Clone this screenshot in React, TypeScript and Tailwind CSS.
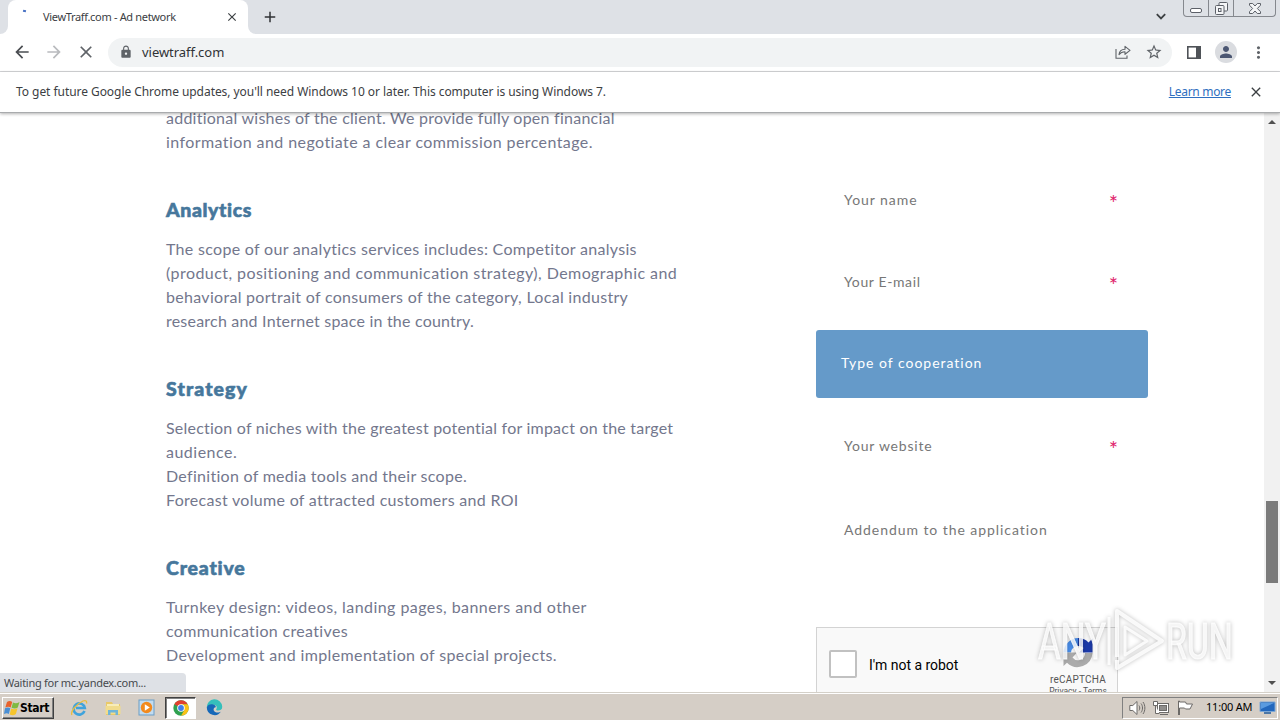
import { MdAdd, MdArrowBack, MdArrowForward, MdClose, MdLock, MdMoreVert, MdPerson, MdStarBorder } from "react-icons/md";

type Line = { text: string; tracking: string };

const sections: { title: string; tracking: string; lines: Line[] }[] = [
    {
        title: "Analytics",
        tracking: "tracking-[0.6px]",
        lines: [
            { text: "The scope of our analytics services includes: Competitor analysis", tracking: "tracking-[0.305px]" },
            { text: "(product, positioning and communication strategy), Demographic and", tracking: "tracking-[0.435px]" },
            { text: "behavioral portrait of consumers of the category, Local industry", tracking: "tracking-[0.3px]" },
            { text: "research and Internet space in the country.", tracking: "tracking-[0.21px]" },
        ],
    },
    {
        title: "Strategy",
        tracking: "tracking-[1.1px]",
        lines: [
            { text: "Selection of niches with the greatest potential for impact on the target", tracking: "tracking-[0.22px]" },
            { text: "audience.", tracking: "tracking-[0.5px]" },
            { text: "Definition of media tools and their scope.", tracking: "tracking-[0.29px]" },
            { text: "Forecast volume of attracted customers and ROI", tracking: "tracking-[0.3px]" },
        ],
    },
    {
        title: "Creative",
        tracking: "tracking-[0.8px]",
        lines: [
            { text: "Turnkey design: videos, landing pages, banners and other", tracking: "tracking-[0.435px]" },
            { text: "communication creatives", tracking: "tracking-[0.34px]" },
            { text: "Development and implementation of special projects.", tracking: "tracking-[0.36px]" },
        ],
    },
];

function TabStrip() {
    return (
        <div className="flex h-[34px] items-start justify-between bg-[#dee1e6]">
            <div className="flex h-full items-start">
                <div className="h-full w-2 bg-white">
                    <div className="h-full w-2 rounded-br-lg bg-[#dee1e6]" />
                </div>
                <div className="flex h-full w-[240px] items-center rounded-t-lg bg-white pl-[15px]">
                    <div className="mb-3 h-[2px] w-[3px] rotate-12 bg-[#4a72c4]" />
                    <span className="ml-[17px] w-[180px] whitespace-nowrap text-[11px] tracking-[-0.33px] text-[#3c4043]">ViewTraff.com - Ad network</span>
                    <MdClose className="ml-[2px] h-[14px] w-[14px] text-[#3c4043]" />
                </div>
                <div className="h-full w-2 bg-white">
                    <div className="h-full w-2 rounded-bl-lg bg-[#dee1e6]" />
                </div>
                <MdAdd className="ml-[5px] mt-2 h-[18px] w-[18px] text-[#303236]" />
            </div>
            <div className="flex items-start">
                <svg className="mr-[17px] mt-3 h-[9px] w-[10px]" viewBox="0 0 10 9" fill="none" stroke="#3c4043" strokeWidth="1.8">
                    <path d="M0.8 2.2 5 6.4 9.2 2.2" />
                </svg>
                <div className="mr-[4px] flex h-[17px] w-[93px] rounded-b-[4px] border border-t-0 border-[#85888e] text-[#5c6068]">
                    <div className="flex w-[25px] justify-center border-r border-[#85888e] pt-2">
                        <div className="h-[5px] w-3 rounded-[2px] border border-[#5c6068] bg-white" />
                    </div>
                    <div className="flex w-[25px] justify-center border-r border-[#85888e]">
                        <svg className="mt-[2px] h-[13px] w-[13px]" viewBox="0 0 13 13" fill="#f4f5f7" stroke="#5c6068">
                            <rect x="4" y="0.5" width="8.5" height="8.5" rx="1" />
                            <rect x="0.5" y="3.5" width="8.5" height="9" rx="1" />
                            <rect x="3.5" y="6.5" width="2.5" height="3" />
                        </svg>
                    </div>
                    <div className="flex flex-1 justify-center">
                        <svg className="mt-[3px] h-[11px] w-3" viewBox="0 0 12 11" fill="#f4f5f7" stroke="#5c6068">
                            <path d="M0.5 0.5h3.2L6 3l2.3-2.5h3.2v1.7L8.4 5.5l3.1 3.2v1.8H8.3L6 8l-2.3 2.5H0.5V8.7l3.1-3.2L0.5 2.2z" />
                        </svg>
                    </div>
                </div>
            </div>
        </div>
    );
}

function Toolbar() {
    return (
        <div className="flex h-[38px] items-center border-b border-[#d5d6d9] bg-white pb-[1px] text-[#5f6368]">
            <MdArrowBack className="ml-[12px] h-5 w-5 text-[#4a4d51]" />
            <MdArrowForward className="ml-3 h-5 w-5 text-[#b9bbbe]" />
            <MdClose className="ml-3 h-5 w-5" />
            <div className="ml-3 flex h-[29px] w-[1064px] items-center rounded-full bg-[#f1f3f4]">
                <MdLock className="ml-[11px] h-[14px] w-[14px]" />
                <span className="ml-[9px] mt-[2px] flex-1 text-[13px] tracking-[-0.04px] text-[#303236]">viewtraff.com</span>
                <svg className="h-[14px] w-4" viewBox="0 0 16 14" fill="none" stroke="#5f6368" strokeWidth="1.1">
                    <path d="M1 4v9.2h11V10.5" />
                    <path d="M4 9.6c.4-3.4 2.6-5.2 6-5.3V1.4L15 5.4 10 9.3V6.7C7.3 6.7 5.4 7.6 4 9.6z" strokeLinejoin="round" />
                </svg>
                <MdStarBorder className="ml-[14px] mr-[9px] h-[18px] w-[18px]" />
            </div>
            <svg className="ml-[15px] h-[13px] w-[14px]" viewBox="0 0 14 13" fill="none" stroke="#4f5358">
                <rect x="0.8" y="0.8" width="12.4" height="11.4" strokeWidth="1.6" />
                <path d="M11 1v11" strokeWidth="4" />
            </svg>
            <div className="ml-[14px] flex h-[22px] w-[22px] items-center justify-center rounded-full bg-[#dadce0]">
                <MdPerson className="h-[18px] w-[18px] text-[#4b5672]" />
            </div>
            <MdMoreVert className="ml-[12px] h-[19px] w-[19px]" />
        </div>
    );
}

function UpdateBanner() {
    return (
        <div className="relative z-10 flex h-[41px] items-center border-b border-[#a9abad] bg-white pl-4 text-[12px] shadow-[0_1px_3px_rgba(0,0,0,0.3)]">
            <span className="flex-1 whitespace-nowrap tracking-[-0.053px] text-[#3c4043]">
                To get future Google Chrome updates, you'll need Windows 10 or later. This computer is using Windows 7.
            </span>
            <a className="tracking-[-0.3px] text-[#2f6fc0] underline">Learn more</a>
            <MdClose className="ml-[17px] mr-4 h-4 w-4 text-[#3c4043]" />
        </div>
    );
}

function Field({ label, tracking, required }: { label: string; tracking: string; required?: boolean }) {
    return (
        <div className="flex h-5 items-center justify-between pl-7 pr-[30px] text-[14px] text-[#777]">
            <span className={tracking}>{label}</span>
            {required && <span className="mt-[7px] text-[22px] leading-5 text-[#e0246c]">*</span>}
        </div>
    );
}

function Recaptcha() {
    return (
        <div className="flex h-[78px] w-[302px] justify-between border border-[#d3d3d3] bg-[#f9f9f9]">
            <div className="flex h-[72px] items-center pl-3">
                <div className="h-7 w-7 rounded-[2px] border-2 border-[#c1c1c1] bg-white" />
                <span className="ml-3 mt-[2px] font-[Roboto] text-[14px] tracking-[-0.03px] text-black">I'm not a robot</span>
            </div>
            <div className="mr-[9px] flex w-[60px] flex-col items-center pt-[9px] text-[#555]">
                <svg className="h-8 w-8" viewBox="0 0 32 32">
                    <path d="M16 1A15 15 0 0 0 1.5 15.5H9A7 7 0 0 1 16 9z" fill="#4a90ee" />
                    <path d="M16 1c4.5 0 8 1.7 10.5 4.5L30.5 1.5V15.5H17l4.5-4.5A7 7 0 0 0 16 9z" fill="#1c3aa9" />
                    <path d="M1.5 15.5V29l3.5-3.3A15 15 0 0 0 30.5 16H23a7 7 0 0 1-12.5 4.5L15 15.5z" fill="#ababab" />
                </svg>
                <span className="mt-[4px] font-[Roboto] text-[10px] leading-[13px] tracking-[0.22px]">reCAPTCHA</span>
                <span className="font-[Roboto] text-[8.5px] leading-[10px] whitespace-nowrap">Privacy - Terms</span>
            </div>
        </div>
    );
}

function Page() {
    return (
        <div className="relative flex h-[579px] overflow-hidden bg-white">
            <div className="-mt-[7px] w-[600px] shrink-0 whitespace-nowrap pl-[166px] font-[Lato] text-base leading-6 text-[#73778d]">
                <p className="tracking-[0.245px]">additional wishes of the client. We provide fully open financial</p>
                <p className="tracking-[0.42px]">information and negotiate a clear commission percentage.</p>
                {sections.map((s) => (
                    <div key={s.title} className="mb-[43px] mt-[43px]">
                        <h2 className={`mb-[15px] pt-px text-[19.5px] font-black leading-6 text-[#46779c] [-webkit-text-stroke:0.6px_#46779c] ${s.tracking}`}>{s.title}</h2>
                        {s.lines.map((l) => (
                            <p key={l.text} className={l.tracking}>{l.text}</p>
                        ))}
                    </div>
                ))}
            </div>
            <div className="ml-[216px] w-[332px] shrink-0 pt-[76px] font-[Lato]">
                <Field label="Your name" tracking="tracking-[0.95px]" required />
                <div className="mt-[62px]">
                    <Field label="Your E-mail" tracking="tracking-[0.62px]" required />
                </div>
                <div className="mt-[39px] flex h-[68px] items-center rounded-[3px] bg-[#659ac9] pb-[3px] pl-[25px] text-[14px] tracking-[0.98px] text-white">
                    Type of cooperation
                </div>
                <div className="mt-[37px]">
                    <Field label="Your website" tracking="tracking-[0.78px]" required />
                </div>
                <div className="mt-16">
                    <Field label="Addendum to the application" tracking="tracking-[0.94px]" />
                </div>
                <div className="mt-[88px]">
                    <Recaptcha />
                </div>
            </div>
            <div className="ml-auto flex w-4 shrink-0 flex-col items-center bg-[#f1f1f1] pt-[7px]">
                <div className="h-0 w-0 border-x-4 border-b-4 border-x-transparent border-b-[#505050]" />
                <div className="mt-[377px] h-[82px] w-3 bg-[#7b7b7b]" />
                <div className="mt-[98px] h-0 w-0 border-x-4 border-t-4 border-x-transparent border-t-[#505050]" />
            </div>
            <div className="absolute bottom-0 left-0 h-[19px] w-[186px] rounded-tr-[4px] bg-[#dee1e6] pl-[4px] text-[11px] leading-[19px] tracking-[-0.28px] text-[#46494d]">
                Waiting for mc.yandex.com...
            </div>
            <Watermark />
        </div>
    );
}

function Watermark() {
    return (
        <svg className="absolute bottom-[14px] left-[1034px] h-[72px] w-[214px] overflow-visible drop-shadow-[0_0_2px_rgba(0,0,0,0.3)]" viewBox="0 0 214 72" fill="white" fillOpacity="0.8">
            <g fontFamily="Roboto" fontSize="50" stroke="white" strokeOpacity="0.8">
                <text x="4" y="53" textLength="68" lengthAdjust="spacingAndGlyphs">ANY</text>
                <text x="132" y="53" textLength="67" lengthAdjust="spacingAndGlyphs">RUN</text>
            </g>
            <g fill="none" stroke="white" strokeOpacity="0.85" strokeWidth="4" strokeLinejoin="round">
                <path d="M83 51V5L128 35 83 62V54" />
                <path d="M91 21v28L113 35z" strokeWidth="3" />
                <path d="M75 11v48" strokeWidth="3" />
            </g>
        </svg>
    );
}

function Taskbar() {
    return (
        <div className="flex h-7 items-center border-t border-[#d4d0c8] bg-[#d5cec6] shadow-[inset_0_1px_0_#fff]">
            <div className="ml-[2px] mt-[2px] flex h-[22px] w-[52px] items-center border border-b-[#404040] border-l-white border-r-[#404040] border-t-white pl-[1px] shadow-[inset_-1px_-1px_0_#808080]">
                <svg className="h-4 w-4 shrink-0" viewBox="0 0 16 16">
                    <path d="M3 2C5 .5 7 1 8.200 2L6.700 7.500C5 6.500 3.500 6.500 1.300 7.500z" fill="#e8622c" />
                    <path d="M9 2.500c2 1 4 1 6.500-.5l-1.700 5.500C12 9 9.500 8.800 7.500 7.800z" fill="#7fba42" />
                    <path d="M1 8.300c2-1 3.700-1 5.300 0L4.800 14C3.500 13 2 13 0 14z" fill="#4a8fd4" />
                    <path d="M7.200 8.600c2 1 4 1 6.300-.3L11.900 14c-2 1.500-4 1.500-6.200.5z" fill="#f6c52c" />
                </svg>
                <span className="text-[12px] font-bold tracking-[-0.35px] font-['DejaVu_Sans_Condensed','DejaVu_Sans',sans-serif] text-black">Start</span>
            </div>
            <svg className="ml-[16px] mt-[2px] h-[18px] w-[18px]" viewBox="0 0 18 18" fill="none">
                <path d="M14.5 12a5.6 5.6 0 1 1 .3-3H6" stroke="#3fa3dc" strokeWidth="2.6" />
                <path d="M2 16C0 13 6 5 13 2c3-1 4 0 3.5 2.5" stroke="#e8bd3e" strokeWidth="1.3" />
            </svg>
            <svg className="ml-4 mt-[2px] h-[18px] w-[18px]" viewBox="0 0 18 18">
                <path d="M2 3h6l1 2h7v11H2z" fill="#e9c968" />
                <path d="M3 5h12v5H3z" fill="#f8edb8" />
                <path d="M1.5 7h15v8h-15z" fill="#f1dc8d" />
                <path d="M4 16v-5h10v5h-2.5v-2.5h-5V16z" fill="#6fb5d8" />
            </svg>
            <svg className="ml-4 mt-[2px] h-[17px] w-[17px]" viewBox="0 0 17 17">
                <rect x="1" y="1" width="15" height="15" fill="#c2dcf0" stroke="#6b9dc6" />
                <circle cx="8.5" cy="8.5" r="5.7" fill="#f28a1e" />
                <path d="M6.8 5.3v6.4l5-3.2z" fill="white" />
            </svg>
            <div className="ml-[10px] mt-[2px] flex h-[22px] w-[31px] items-center justify-center border border-b-white border-l-[#404040] border-r-white border-t-[#404040] bg-white shadow-[inset_1px_1px_0_#808080]">
                <svg className="h-4 w-4" viewBox="0 0 16 16">
                    <circle cx="8" cy="8" r="7.7" fill="#2fa150" />
                    <path d="M8 8 1.33 4.15A7.7 7.7 0 0 1 14.67 4.15H8z" fill="#e0402f" />
                    <path d="M8 4.15h6.67A7.7 7.7 0 0 1 8 15.7L11.4 9.9z" fill="#fbc116" />
                    <circle cx="8" cy="8" r="3.8" fill="white" />
                    <circle cx="8" cy="8" r="2.9" fill="#3f7fea" />
                </svg>
            </div>
            <svg className="ml-[10px] mt-[2px] h-[17px] w-[17px]" viewBox="0 0 17 17">
                <path d="M.8 8.5a7.7 7.7 0 0 1 15.4-1c.3 3-2 4-4.2 4-1.5 0-2.3-.5-1.7-1.3C12 7 9 5 6 6 3 6.5 1 8 .8 8.5z" fill="#35bfbb" />
                <path d="M.8 8.5C1.3 5.5 5 4.5 7.5 5.5 9 6 10 7 9.8 8.3 7 8 6.5 13 10.5 13.5c2 .3 3.5-.3 4.5-1A7.7 7.7 0 0 1 .8 8.5z" fill="#1668b8" />
            </svg>
            <div className="ml-auto mr-[2px] mt-[2px] flex h-[22px] w-[156px] items-center border border-b-white border-l-[#808080] border-r-white border-t-[#808080]">
                <svg className="ml-[6px] h-4 w-[17px]" viewBox="0 0 17 16" fill="none" stroke="#6c6a68">
                    <path d="M.8 5.5h3L8 1.5v13L3.8 10.5h-3z" fill="white" />
                    <path d="M10 5.5c1 1.5 1 3.5 0 5M12 3.5c2 2.5 2 6.5 0 9M14 2c2.5 3.5 2.5 8.5 0 12" />
                </svg>
                <svg className="ml-[7px] h-4 w-4" viewBox="0 0 16 16" fill="none" stroke="#6c6a68">
                    <rect x="4.5" y="3.5" width="11" height="9" fill="white" />
                    <rect x="6.5" y="5.5" width="7" height="5" fill="#908e8c" />
                    <path d="M.5 1.500h4v4h-4zM2.500 5.500v8h4M7 14.500h8" fill="white" />
                </svg>
                <svg className="ml-2 h-[15px] w-4" viewBox="0 0 16 15" fill="white" stroke="#6c6a68">
                    <path d="M1.5 15V1h1v1h6l1 2h6L13 9H8.5L7.5 8h-5v7z" />
                </svg>
                <span className="ml-[13px] whitespace-nowrap text-[11px] tracking-[-0.2px] text-black">11:00 AM</span>
                <svg className="ml-[7px] h-[14px] w-[17px]" viewBox="0 0 17 14">
                    <path d="M1 1h15v9.5H1z" fill="#2368bd" stroke="#7da7d5" />
                    <path d="M2 2h13L2 8z" fill="#5a9be0" />
                    <path d="M5 11h7v2H5z" fill="#4c77a7" />
                </svg>
            </div>
        </div>
    );
}

export default function App() {
    return (
        <div className="h-[720px] w-[1280px] overflow-hidden bg-white font-['Noto_Sans',sans-serif]">
            <TabStrip />
            <Toolbar />
            <UpdateBanner />
            <Page />
            <Taskbar />
        </div>
    );
}
